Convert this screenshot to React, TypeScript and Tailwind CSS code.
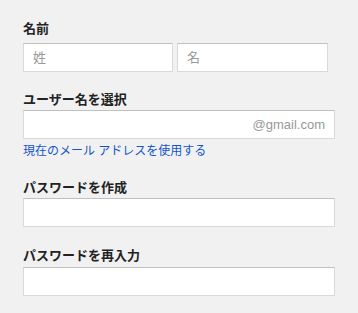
const jp = '"Liberation Sans", Arial, "Noto Sans CJK JP", sans-serif'

function Label({ children, className = '' }: { children: React.ReactNode; className?: string }) {
  return (
    <div className={`text-[13px] font-bold leading-[16px] text-[#222] ${className}`}>
      {children}
    </div>
  )
}

const inputCls =
  'h-[29px] bg-white border border-[#d9d9d9] border-t-[#c0c0c0] text-[13px] flex items-center'

export default function App() {
  return (
    <div className="w-[358px] h-[313px] bg-[#f1f1f1] pl-[23px] pt-[21px]" style={{ fontFamily: jp }}>
      <Label>名前</Label>
      <div className="flex gap-[4px] mt-[6px]">
        <div className={`${inputCls} w-[150px] pl-[9px] text-[#999]`}>姓</div>
        <div className={`${inputCls} w-[151px] pl-[9px] text-[#999]`}>名</div>
      </div>

      <Label className="mt-[20px]">ユーザー名を選択</Label>
      <div className={`${inputCls} w-[312px] mt-[2px] justify-end pr-[9px] text-[#999]`}>
        @gmail.com
      </div>
      <div className="text-[12px] leading-[16px] text-[#15c] mt-[4px]">現在のメール アドレスを使用する</div>

      <Label className="mt-[21px]">パスワードを作成</Label>
      <div className={`${inputCls} w-[312px] mt-[2px]`} />

      <Label className="mt-[21px]">パスワードを再入力</Label>
      <div className={`${inputCls} w-[312px] mt-[3px]`} />
    </div>
  )
}
